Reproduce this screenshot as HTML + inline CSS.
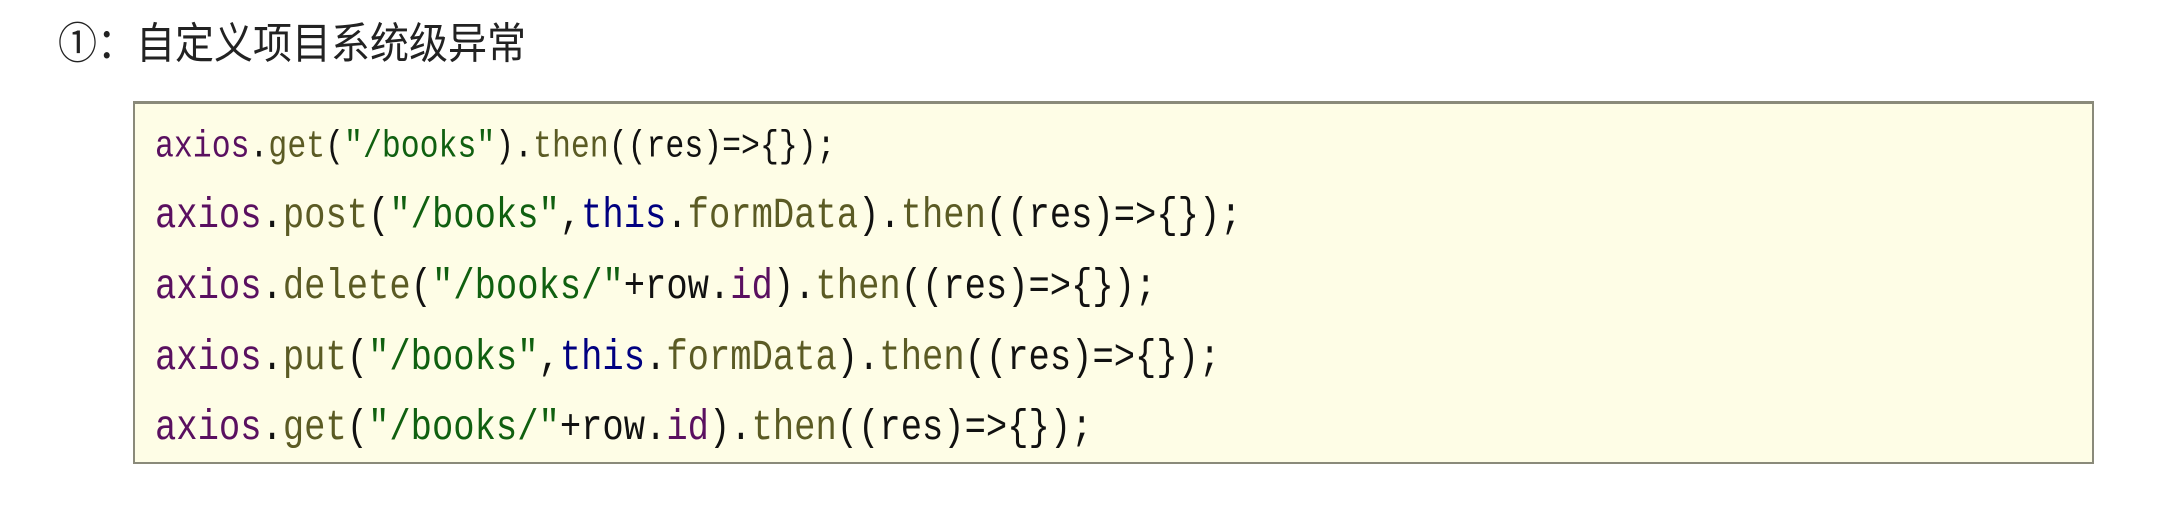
<!DOCTYPE html>
<html><head><meta charset="utf-8"><style>
body{margin:0;width:2182px;height:516px;background:#fff;position:relative;overflow:hidden}
.t{position:absolute;left:58px;top:10px;font:39px "Liberation Sans","Noto Sans CJK SC",sans-serif;color:#222;white-space:nowrap;transform:scaleY(1.1);transform-origin:left top}
.box{position:absolute;left:133px;top:101px;width:1957px;height:358px;background:#fefde6;border:2px solid #8a8a7a;border-top-width:3px;box-sizing:content-box}
.l{position:absolute;left:20px;font-family:"Liberation Mono",monospace;white-space:nowrap;color:#111;transform-origin:left center;}
.a{color:#5a1060}.f{color:#5b5b24}.s{color:#106010}.k{color:#000080}
</style></head><body>
<div class="t">①：自定义项目系统级异常</div>
<div class="box">
<div class="l" style="top:26px;font-size:31.5px;transform:scaleY(1.2)"><span class="a">axios</span>.<span class="f">get</span>(<span class="s">"/books"</span>).<span class="f">then</span>((res)=>{});</div>
<div class="l" style="top:91px;font-size:35.5px;transform:scaleY(1.2)"><span class="a">axios</span>.<span class="f">post</span>(<span class="s">"/books"</span>,<span class="k">this</span>.<span class="f">formData</span>).<span class="f">then</span>((res)=>{});</div>
<div class="l" style="top:162px;font-size:35.5px;transform:scaleY(1.2)"><span class="a">axios</span>.<span class="f">delete</span>(<span class="s">"/books/"</span>+row.<span class="a">id</span>).<span class="f">then</span>((res)=>{});</div>
<div class="l" style="top:233px;font-size:35.5px;transform:scaleY(1.2)"><span class="a">axios</span>.<span class="f">put</span>(<span class="s">"/books"</span>,<span class="k">this</span>.<span class="f">formData</span>).<span class="f">then</span>((res)=>{});</div>
<div class="l" style="top:303px;font-size:35.5px;transform:scaleY(1.2)"><span class="a">axios</span>.<span class="f">get</span>(<span class="s">"/books/"</span>+row.<span class="a">id</span>).<span class="f">then</span>((res)=>{});</div>
</div>
</body></html>
